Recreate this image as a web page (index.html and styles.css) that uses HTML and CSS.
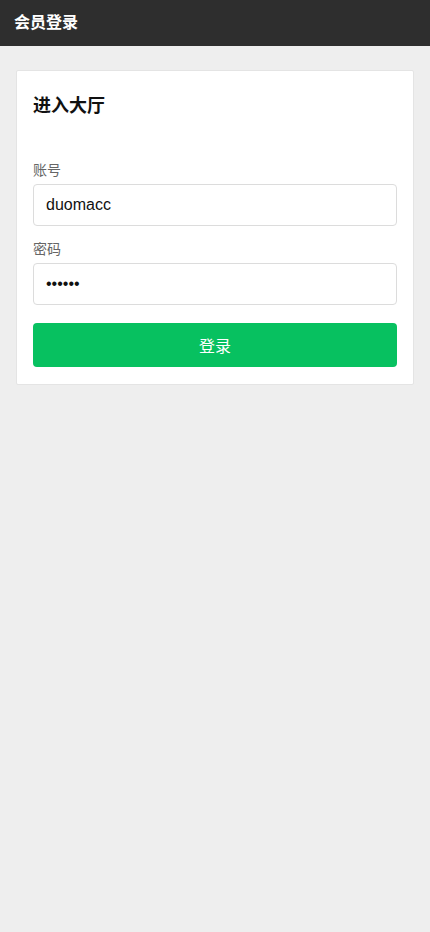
FILE: index.html
```html
<!DOCTYPE html>
<html lang="zh">
<head>
<meta charset="utf-8">
<meta name="viewport" content="width=device-width, initial-scale=1">
<title>会员登录</title>
<link rel="stylesheet" href="styles.css">
</head>
<body>
<header class="topbar"><span class="topbar-title">会员登录</span></header>
<main class="page">
  <section class="card">
    <h2 class="card-title">进入大厅</h2>
    <form class="form">
      <label class="field-label" for="acc">账号</label>
      <input class="field-input" id="acc" type="text" value="duomacc">
      <label class="field-label second" for="pwd">密码</label>
      <input class="field-input" id="pwd" type="password" value="123456">
      <button class="btn-login" type="button">登录</button>
    </form>
  </section>
</main>
</body>
</html>
```
FILE: styles.css
```css
* { box-sizing: border-box; }
html, body {
  margin: 0;
  padding: 0;
  background: #eeeeee;
  font-family: "Liberation Sans", Arial, "Noto Sans CJK SC", sans-serif;
  color: #111;
}
.topbar {
  height: 46px;
  background: #2e2e2e;
  display: flex;
  align-items: center;
  padding: 0 14px;
}
.topbar-title {
  color: #fff;
  font-size: 16px;
  font-weight: bold;
  line-height: 20px;
}
.page {
  padding: 24px 16px;
}
.card {
  background: #fff;
  border: 1px solid #e4e4e4;
  border-radius: 2px;
  padding: 22px 16px 17px;
}
.card-title {
  margin: 0;
  font-size: 18px;
  line-height: 26px;
  font-weight: bold;
  color: #111;
}
.form {
  display: flex;
  flex-direction: column;
  margin-top: 41px;
}
.field-label {
  font-size: 14px;
  line-height: 20px;
  color: #666;
  margin-bottom: 4px;
}
.field-label.second { margin-top: 13px; }
.field-input {
  height: 42px;
  border: 1px solid #dcdcdc;
  border-radius: 4px;
  padding: 0 12px;
  font-size: 16px;
  font-family: "Liberation Sans", Arial, sans-serif;
  color: #111;
  background: #fff;
  outline: none;
}
.btn-login {
  margin-top: 18px;
  height: 44px;
  border: none;
  border-radius: 4px;
  background: #07c160;
  color: #fff;
  font-size: 16px;
  font-family: "Liberation Sans", Arial, "Noto Sans CJK SC", sans-serif;
}
```
